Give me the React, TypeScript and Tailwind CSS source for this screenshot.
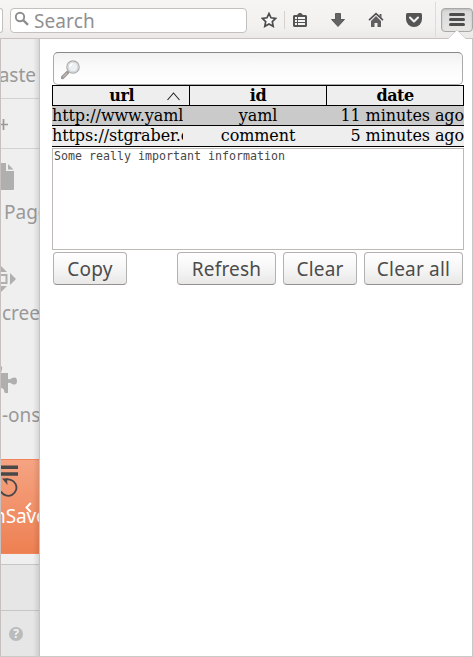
import React from 'react';

const ui = "font-['Noto_Sans','Open_Sans',sans-serif]";

function Toolbar() {
  return (
    <header className="flex h-[38px] w-full shrink-0 items-start bg-gradient-to-b from-[#f6f5f4] via-[#f2f1f0] via-70% to-[#ebe9e8]">
      <div className="mt-2 h-[25px] w-[3px] shrink-0 rounded-r-sm border border-l-0 border-[#c3c0bd] bg-white" />
      <div className="mt-2 ml-[7px] flex h-[25px] w-[237px] shrink-0 items-center rounded-sm border border-[#c3c0bd] bg-white">
        <svg width="16" height="16" viewBox="0 0 16 16" className="ml-[3px] -mt-1 shrink-0" fill="none" stroke="#8d8d8d">
          <circle cx="6" cy="6" r="4.2" strokeWidth="1.9" />
          <path d="M9 9l5 4.8" strokeWidth="2.4" />
        </svg>
        <span className={`${ui} ml-[4px] mt-[2px] text-[19px] leading-[23px] tracking-[0.1px] text-[#8f9091]`}>Search</span>
      </div>
      <svg width="16" height="16" viewBox="0 0 16 16" className="ml-[14px] mt-3 shrink-0">
        <path d="M8 1.500l2 4.300 4.700.6-3.400 3.200.9 4.700L8 12l-4.200 2.300.9-4.700L1.300 6.400 6 5.800z" fill="#fafafa" stroke="#4c4c4c" strokeWidth="1.700" />
      </svg>
      <div className="ml-[7px] mt-[11px] h-[18px] w-px shrink-0 bg-[#d4d1cf]" />
      <svg width="16" height="16" viewBox="0 0 16 16" className="ml-[7px] mt-3 shrink-0">
        <path d="M2 3h3l2-2h2l2 2h3l1 1v10l-1 1H2l-1-1V4z" fill="#555" />
        <path d="M3 5h10v8H3z" fill="#f4f4f4" />
        <path d="M3 7.500h10M3 10.500h10M5.500 5v8" stroke="#555" />
      </svg>
      <svg width="16" height="16" viewBox="0 0 16 16" className="ml-[22px] mt-3 shrink-0">
        <path d="M5.500 1.500h5v6h4L8 14.500l-6.500-7h4z" fill="#646464" stroke="#484848" strokeWidth=".8" />
      </svg>
      <svg width="16" height="16" viewBox="0 0 16 16" className="ml-[22px] mt-3 shrink-0">
        <path d="M1 8.200L8 1.700l7 6.500" fill="none" stroke="#505050" strokeWidth="1.600" />
        <path d="M11.500 2h2v4l-2-2zM8 4l5 5v6H9.500v-4h-3v4H3V9z" fill="#606060" />
      </svg>
      <svg width="16" height="16" viewBox="0 0 16 16" className="ml-[22px] mt-3 shrink-0">
        <path d="M1.500 1h13Q16 1 16 2.500V7a8 8 0 0 1-16 0V2.500Q0 1 1.500 1z" fill="#555" />
        <path d="M4 5.500l4 4 4-4" fill="none" stroke="#f2f2f2" strokeWidth="2.100" strokeLinecap="round" strokeLinejoin="round" />
      </svg>
      <div className="ml-[13px] mt-[2px] h-[35px] w-px shrink-0 bg-[#dedbd9]" />
      <div className="ml-[5px] mt-2 h-6 w-8 shrink-0 rounded-sm border border-[#aaa8a6] bg-gradient-to-b from-[#d9d9d9] to-[#e7e6e5] shadow-[inset_0_1px_2px_#bcbcbc]">
        <div className="ml-[7px] mt-1 flex w-4 flex-col gap-[2px]">
          <i className="h-[3px] rounded-sm bg-[#4d4d4d]" />
          <i className="h-[3px] rounded-sm bg-[#4d4d4d]" />
          <i className="h-[3px] rounded-sm bg-[#4d4d4d]" />
        </div>
      </div>
    </header>
  );
}

function Sidebar() {
  const label = `${ui} whitespace-nowrap text-[19px] leading-6`;
  return (
    <aside className="relative flex w-10 shrink-0 flex-col overflow-hidden border-x border-l-[#c6c1be] border-r-[#c6c4c3] bg-[#efefef] text-[#999]">
      <div className="flex h-[60px] items-end justify-end border-b border-[#d2d2d2] pb-[11px] pr-[3px]">
        <span className={label}>Paste</span>
      </div>
      <div className="h-[50px] border-b border-[#d2d2d2] pt-[20px]">
        <svg width="8" height="11" viewBox="0 0 8 11"><path d="M0 5.500h7M2.500 0v11" stroke="#999" strokeWidth="1.700" /></svg>
      </div>
      <div className="h-[102px] pt-[14px]">
        <svg width="14" height="28" viewBox="0 0 14 28"><path d="M0 0h5v8h8v18q0 1-1 1H0z" fill="#afafaf" /><path d="M7 1l5.500 5.500H7z" fill="#afafaf" /></svg>
        <div className={`${label} mt-[9px] pl-[3px]`}>Page</div>
      </div>
      <div className="h-[102px] pt-[14px]">
        <svg width="16" height="28" viewBox="0 0 16 28">
          <path d="M0 1l6 6H0zM0 27l6-6H0zM9 8l6 6-6 6z" fill="#afafaf" />
          <path d="M0 10h5.500v8H0" fill="none" stroke="#afafaf" strokeWidth="2" />
        </svg>
        <div className={`${label} mt-[8px] pl-px`}>creen</div>
      </div>
      <div className="h-[106px] pt-[13px]">
        <svg width="18" height="28" viewBox="0 0 18 28">
          <path d="M0 0q2 1 1 3l-1 4h7v6q2 1 4-1 5-2 5 3t-5 3q-2-2-4-1v10H4q-1-1-1-3-1-2-3-2z" fill="#afafaf" />
        </svg>
        <div className={`${label} mt-[9px] pl-px`}>-ons</div>
      </div>
      <div className="relative h-[95px] shrink-0 border-y border-[#f2845b] bg-gradient-to-b from-[#f5a382] to-[#ee8052] pt-[5px]">
        <svg width="18" height="34" viewBox="0 0 18 34" className="block">
          <path d="M0 2.200h17M0 9h17" stroke="#484848" strokeWidth="3.600" />
          <path d="M3.500 15.300A8.200 8.200 0 1 1 0 26.500" fill="none" stroke="#484848" strokeWidth="1.800" />
          <path d="M1 13.500l6.500-.3-1.500 1.500.5 5.300-2.500-3z" fill="#484848" />
        </svg>
        <div className={`${label} ml-[-7px] mt-[5px] tracking-[-0.1px] text-white`}>nSave</div>
        <svg width="7" height="11" viewBox="0 0 7 11" className="absolute left-[24px] top-[42px]"><path d="M5.800 1L1.500 5.500l4.300 4.500" fill="none" stroke="white" strokeWidth="2" /></svg>
      </div>
      <div className="h-[10px] shrink-0" />
      <div className="h-[47px] shrink-0 border-y border-[#c6c6c6] bg-[#e6e6e6]" />
      <div className="flex-1 bg-[#e6e6e6] pl-2 pt-4">
        <div className={`${ui} flex size-[14px] items-center justify-center rounded-full bg-[#b9bbbc] text-[12px] font-bold leading-none text-[#f2f2f2]`}>?</div>
      </div>
      <div className="absolute inset-y-0 right-0 w-[6px] bg-gradient-to-r from-transparent to-black/10" />
    </aside>
  );
}

const rows = [
  { url: 'http://www.yaml', id: 'yaml', date: '11 minutes ago', style: 'h-5 bg-[#cacaca]' },
  { url: 'https://stgraber.org', id: 'comment', date: '5 minutes ago', style: 'h-[21px] bg-[#eee]' },
];

function Table() {
  return (
    <div className="w-[412px] font-['DejaVu_Serif',serif] text-[16px] leading-5 tracking-[-0.1px] text-black">
      <div className="flex h-[21px] border border-black bg-[#eee] text-center font-bold leading-[19px] tracking-[-0.5px]">
        <div className="flex w-[137px] justify-end border-r border-black pr-[9px]">
          <span>url</span>
          <svg width="13" height="9" viewBox="0 0 13 9" className="ml-[33px] mt-[6px]"><path d="M.5 8L6.500 1l6 7" fill="none" stroke="#222" strokeWidth="1.100" /></svg>
        </div>
        <div className="w-[137px] border-r border-black">id</div>
        <div className="flex-1">date</div>
      </div>
      {rows.map((row) => (
        <div key={row.id} className={`flex border-b border-black ${row.style}`}>
          <div className="w-[131px] overflow-hidden whitespace-nowrap leading-[19px]">{row.url}</div>
          <div className="ml-[6px] w-[138px] text-center leading-[19px]">{row.id}</div>
          <div className="flex-1 whitespace-nowrap text-right leading-[19px]">{row.date}</div>
        </div>
      ))}
    </div>
  );
}

function Button({ text, size }: { text: string; size: string }) {
  return (
    <button className={`${ui} ${size} h-[33px] shrink-0 whitespace-nowrap rounded-[4px] border border-[#b2b2b2] border-b-[#929292] bg-gradient-to-b from-white via-[#f6f6f6] to-[#e9e8e7] text-center text-[19px] leading-[32px] tracking-[0.2px] text-[#4c4c4c]`}>
      {text}
    </button>
  );
}

function Popup() {
  return (
    <main className="flex min-w-0 flex-1 flex-col border-r border-[#c9c9c9] bg-white pl-3 pt-[13px]">
      <div className="ml-px h-[33px] w-[410px] rounded-[5px] border border-[#aaa] border-t-[#888] bg-gradient-to-b from-[#f1f1f1] via-[#fafafa] via-40% to-white pl-[7px] pt-[7px]">
        <svg width="20" height="20" viewBox="0 0 20 20">
          <path d="M1.500 17.500l5-5" stroke="#999" strokeWidth="3.500" strokeLinecap="round" />
          <path d="M2 17l4-4" stroke="#c5b7ae" strokeWidth="1.200" />
          <circle cx="12" cy="7" r="6.200" fill="#edf0f2" stroke="#aaa" strokeWidth="1.200" />
          <circle cx="12" cy="7" r="4.800" fill="none" stroke="#d4d4d4" />
          <path d="M8 6q1-3 4-3-1 3-4 4z" fill="white" />
        </svg>
      </div>
      <Table />
      <div className="mt-px h-[102px] w-[412px] border border-[#bdb9b5] bg-white pl-px font-['DejaVu_Sans_Mono',monospace] text-[11.630px] leading-[14px] text-[#484848]">Some really important information</div>
      <div className="ml-px mt-[2px] flex w-[410px]">
        <Button text="Copy" size="w-[74px]" />
        <Button text="Refresh" size="ml-[50px] w-[99px]" />
        <Button text="Clear" size="ml-[7px] w-[74px]" />
        <Button text="Clear all" size="ml-[7px] w-[99px]" />
      </div>
    </main>
  );
}

export default function App() {
  return (
    <div className="relative flex h-[657px] w-[473px] flex-col overflow-hidden bg-[#f2f1f0]">
      <Toolbar />
      <div className="flex min-h-0 flex-1 border-y border-t-[#cbc2bd] border-b-[#c9c9c9]">
        <Sidebar />
        <Popup />
      </div>
      <svg width="20" height="10" viewBox="0 0 20 10" className="absolute left-[447px] top-[30px]">
        <path d="M1 9l9-9 9 9v1H1z" fill="white" /><path d="M1 9l9-9 9 9" fill="none" stroke="#c6c3c1" strokeWidth=".6" />
      </svg>
    </div>
  );
}
